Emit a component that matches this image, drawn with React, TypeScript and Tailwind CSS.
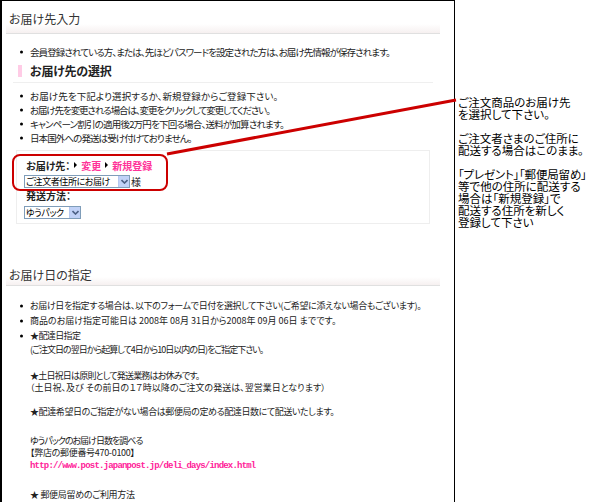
import React from "react";

const Dot = () => (
  <span className="absolute left-[-10px] top-1/2 -translate-y-1/2 w-[3px] h-[3px] rounded-full bg-black" />
);

function Li({ children, h = 14, className = "" }: { children: React.ReactNode; h?: number; className?: string }) {
  return (
    <div className={"relative whitespace-nowrap " + className} style={{ height: h, lineHeight: `${h}px` }}>
      <Dot />
      {children}
    </div>
  );
}

function Line({ children, h = 13, className = "" }: { children?: React.ReactNode; h?: number; className?: string }) {
  return (
    <div className={"whitespace-nowrap " + className} style={{ height: h, lineHeight: `${h}px` }}>
      {children}
    </div>
  );
}

const Tri = () => (
  <span className="inline-block w-0 h-0 border-y-[3px] border-y-transparent border-l-[3px] border-l-black mx-[4px] align-middle" />
);

function FakeSelect({ text, w }: { text: string; w: number }) {
  return (
    <div
      className="flex items-center h-[13px] border border-[#7f9db9] bg-white"
      style={{ width: w }}
    >
      <span className="flex-1 pl-[1px] text-[9px] tracking-[-0.4px] leading-[11px] whitespace-nowrap text-black">{text}</span>
      <span className="w-[11px] h-[11px] bg-[#c1d2f7] border-l border-[#b6c8ef] flex items-center justify-center">
        <svg width="7" height="5" viewBox="0 0 7 5">
          <path d="M0.5 1 L3.5 4 L6.5 1" stroke="#4d6185" strokeWidth="1.6" fill="none" />
        </svg>
      </span>
    </div>
  );
}

export default function App() {
  return (
    <div className="relative w-[600px] h-[502px] overflow-hidden bg-white font-['Noto_Sans_CJK_JP',sans-serif] text-[#222] [font-feature-settings:'palt']">
      <div className="flex">
        {/* main framed box */}
        <div className="w-[455px] h-[502px] shrink-0 border-t border-l-2 border-r border-black pl-[4px] pr-[14px]">
          {/* Section 1 heading */}
          <div className="mt-[11px]">
            <div className="pl-[3px] text-[12px] leading-[14px] text-[#333]">お届け先入力</div>
            <div className="-mt-[2px] h-[10px] bg-[linear-gradient(to_bottom,#ffffff,#f6f0f0)] border-b border-[#e0e0e0]" />
          </div>

          <div className="pl-[24px] text-[9.5px] mt-[11px]">
            <Li className="tracking-[-0.9px]">会員登録されている方、または、先ほどパスワードを設定された方は、お届け先情報が保存されます。</Li>
          </div>

          {/* sub heading */}
          <div className="ml-[7px] w-[420px] mt-[3px] pb-[2px] border-b border-[#efefef] flex items-center h-[21px]">
            <span className="ml-[5px] w-[4px] h-[12px] bg-[#ffcce6]" />
            <span className="ml-[8px] text-[12px] tracking-[-0.2px] font-bold leading-[18px] text-[#222]">お届け先の選択</span>
          </div>

          <div className="pl-[24px] text-[9.5px] mt-[6px]">
            <Li className="tracking-[0.1px]">お届け先を下記より選択するか、新規登録からご登録下さい。</Li>
            <Li className="tracking-[-1.1px]">お届け先を変更される場合は、変更をクリックして変更してください。</Li>
            <Li className="tracking-[-0.8px]">キャンペーン割引の適用後2万円を下回る場合、送料が加算されます。</Li>
            <Li className="tracking-[-0.9px]">日本国外への発送は受け付けておりません。</Li>
          </div>

          {/* form box */}
          <div className="ml-[10px] w-[414px] h-[74px] mt-[5px] border border-[#eeeeee] pl-[7px] pt-[7px]">
            <div className="flex items-center h-[14px] pl-[2px] text-[10px] font-bold whitespace-nowrap">
              <span className="text-[#222]">お届け先：</span>
              <Tri />
              <span className="text-[#ff3399]">変更</span>
              <Tri />
              <span className="text-[#ff3399]">新規登録</span>
            </div>
            <div className="flex items-center mt-[3px]">
              <FakeSelect text="ご注文者住所にお届け" w={106} />
              <span className="ml-[1px] text-[10px] leading-[13px]">様</span>
            </div>
            <div className="h-[14px] leading-[14px] mt-[1px] pl-[2px] text-[10px] font-bold text-[#222]">発送方法：</div>
            <div className="mt-[3px]">
              <FakeSelect text="ゆうパック" w={57} />
            </div>
          </div>

          {/* Section 2 heading */}
          <div className="mt-[44px]">
            <div className="pl-[3px] text-[12px] leading-[14px] text-[#333]">お届け日の指定</div>
            <div className="-mt-[5px] h-[9px] bg-[linear-gradient(to_bottom,#ffffff,#f6f0f0)] border-b border-[#e0e0e0]" />
          </div>

          <div className="pl-[24px] text-[9px] mt-[12px]">
            <Li h={15} className="tracking-[-0.35px]">お届け日を指定する場合は、以下のフォームで日付を選択して下さい(ご希望に添えない場合もございます)。</Li>
            <Li h={15} className="tracking-[0px]">商品のお届け指定可能日は 2008年 08月 31日から2008年 09月 06日 までです。</Li>
            <Li h={15} className="tracking-[-0.6px]">★配達日指定</Li>
            <Line h={13} className="tracking-[-1px]">(ご注文日の翌日から起算して4日から10日以内の日)をご指定下さい。</Line>
            <Line h={13} />
            <Line h={13} className="tracking-[-0.8px]">★土日祝日は原則として発送業務はお休みです。</Line>
            <Line h={12} className="tracking-[0px]">（土日祝、及び その前日の１７時以降のご注文の発送は、翌営業日となります）</Line>
            <Line h={12} />
            <Line h={12} className="tracking-[-0.4px]">★配達希望日のご指定がない場合は郵便局の定める配達日数にて配送いたします。</Line>
            <Line h={16} />
            <Line h={13} className="tracking-[-1px]">ゆうパックのお届け日数を調べる</Line>
            <Line h={12} className="tracking-[-0.3px]">【弊店の郵便番号470-0100】</Line>
            <Line h={15} className="font-['Liberation_Mono',monospace] font-bold text-[9px] tracking-[-0.8px] text-[#ff2299]">
              http://www.post.japanpost.jp/deli_days/index.html
            </Line>
            <Line h={14} />
            <Line h={13} className="tracking-[-0.3px]">★ 郵便局留めのご利用方法</Line>
          </div>
        </div>

        {/* annotation column */}
        <div className="pl-[3px] pt-[96px] text-[11.5px] leading-[12px] text-black whitespace-nowrap">
          <div>ご注文商品のお届け先</div>
          <div>を選択して下さい。</div>
          <div className="h-[12px]" />
          <div>ご注文者さまのご住所に</div>
          <div>配送する場合はこのまま。</div>
          <div className="h-[12px]" />
          <div className="tracking-[-0.2px]">「プレゼント」「郵便局留め」</div>
          <div>等で他の住所に配送する</div>
          <div>場合は「新規登録」で</div>
          <div>配送する住所を新しく</div>
          <div>登録して下さい</div>
        </div>
      </div>

      {/* annotation overlays */}
      <div className="absolute left-[12px] top-[154px] w-[156px] h-[37px] border-2 border-[#cc0000] rounded-[8px] pointer-events-none" />
      <svg className="absolute left-0 top-0 pointer-events-none" width="600" height="502">
        <line x1="167" y1="154" x2="456" y2="100" stroke="#cc0000" strokeWidth="3" />
      </svg>
    </div>
  );
}
